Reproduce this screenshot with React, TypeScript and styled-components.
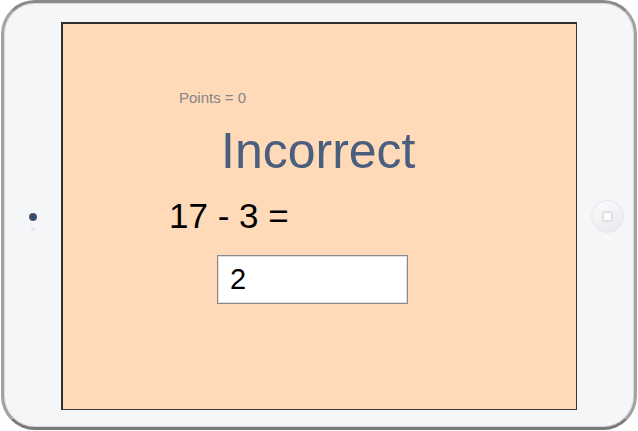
import React from "react";
import styled, { createGlobalStyle } from "styled-components";

const Global = createGlobalStyle`
  html, body { margin: 0; padding: 0; background: #ffffff; }
  body { font-family: "Liberation Sans", Arial, sans-serif; }
`;

const Device = styled.div`
  box-sizing: border-box;
  margin-left: 1px;
  width: 636px;
  height: 430px;
  border: 3px solid #a2a2a2;
  border-top-color: #8a8a8a;
  border-bottom-color: #7a7a7a;
  border-radius: 34px;
  background: #f5f6f8;
  box-shadow: inset 0 0 0 1px #d8d9db;
  display: flex;
  align-items: center;
`;

const LeftBezel = styled.div`
  width: 57px;
  align-self: stretch;
  display: flex;
  flex-direction: column;
  align-items: center;
  justify-content: center;
  gap: 6px;
  padding-top: 13px;
  box-sizing: border-box;
`;

const Camera = styled.div`
  width: 8px;
  height: 8px;
  border-radius: 50%;
  background: radial-gradient(circle at 50% 50%, #24508f 0 25%, #4a4e56 45%, #62666c 100%);
`;

const Sensor = styled.div`
  width: 4px;
  height: 4px;
  border-radius: 50%;
  background: #e6e8ec;
`;

const RightBezel = styled.div`
  flex: 1;
  align-self: stretch;
  display: flex;
  align-items: center;
  justify-content: center;
  padding-left: 3px;
  padding-top: 2px;
`;

const HomeButton = styled.div`
  box-sizing: border-box;
  width: 33px;
  height: 33px;
  border-radius: 50%;
  border: 1px solid #e6e7ea;
  background: linear-gradient(160deg, #fafbfc 0%, #eef0f2 60%, #e8eaed 100%);
  display: flex;
  align-items: center;
  justify-content: center;
`;

const HomeSquare = styled.div`
  box-sizing: border-box;
  width: 11px;
  height: 11px;
  border: 2px solid #dfe0e3;
  border-radius: 3px;
  background: #fdfdfd;
`;

const Screen = styled.div`
  box-sizing: border-box;
  width: 516px;
  height: 388px;
  margin-top: 2px;
  background: #ffdab9;
  border-top: 2px solid #2e2e2e;
  border-left: 2px solid #2e2e2e;
  border-right: 1px solid #3a3a3a;
  border-bottom: 1px solid #3a3a3a;
  display: flex;
  flex-direction: column;
  align-items: flex-start;
`;

const Points = styled.div`
  margin-top: 65px;
  margin-left: 116px;
  font-size: 15px;
  line-height: 17px;
  color: #858585;
`;

const Status = styled.div`
  margin-top: 15px;
  margin-left: 158px;
  font-size: 50px;
  line-height: 60px;
  color: #4a5e7e;
`;

const Question = styled.div`
  margin-top: 14px;
  margin-left: 106px;
  font-size: 35px;
  line-height: 42px;
  color: #000000;
`;

const Answer = styled.input`
  box-sizing: border-box;
  margin-top: 18px;
  margin-left: 154px;
  width: 191px;
  height: 49px;
  padding: 0 0 0 12px;
  border: 1px solid #8a8a8a;
  box-shadow: inset 0 0 0 1px #e0e0e0;
  background: #ffffff;
  font-family: "Liberation Sans", Arial, sans-serif;
  font-size: 29px;
  color: #000000;
  outline: none;
`;

export default function App() {
  return (
    <>
      <Global />
      <Device>
        <LeftBezel>
          <Camera />
          <Sensor />
        </LeftBezel>
        <Screen>
          <Points>Points = 0</Points>
          <Status>Incorrect</Status>
          <Question>17 - 3 =</Question>
          <Answer defaultValue="2" />
        </Screen>
        <RightBezel>
          <HomeButton>
            <HomeSquare />
          </HomeButton>
        </RightBezel>
      </Device>
    </>
  );
}
